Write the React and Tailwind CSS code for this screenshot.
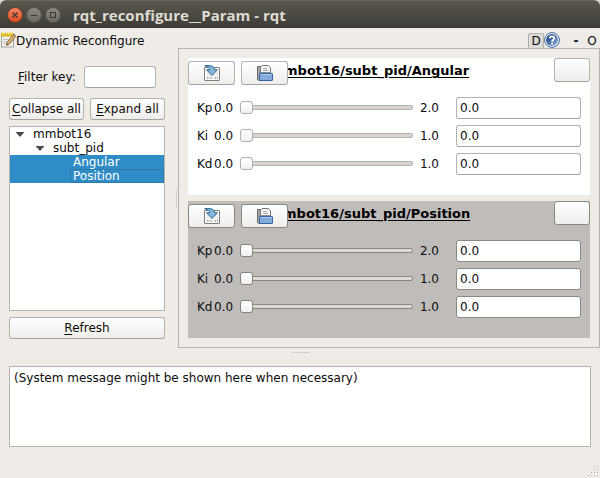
import { useState } from "react";

const BUTTON = "rounded-[3px] border bg-gradient-to-b from-white to-[#efedea] text-center";
const FIELD = "h-[22px] min-w-0 rounded-[3px] border bg-white px-[3px] outline-none";
const SOFT_EDGE = "border-[#b5b2ae] border-b-[#a6a3a0]";
const STRONG_EDGE = "border-[#8a8783]";

const GROUPS = [
  { name: "/mmbot16/subt_pid/Angular", active: false },
  { name: "/mmbot16/subt_pid/Position", active: true },
];

const PARAMS = [
  { name: "Kp", min: "0.0", max: "2.0" },
  { name: "Ki", min: "0.0", max: "1.0" },
  { name: "Kd", min: "0.0", max: "1.0" },
];

function NotepadIcon() {
  return (
    <svg width="16" height="16" viewBox="0 0 16 16" className="shrink-0" aria-hidden="true">
      <rect x="1.5" y="2.5" width="12" height="12.5" fill="#f1f1ef" stroke="#a3a49f" />
      <path d="M3 7.5h8M3 9.5h7M3 11.5h5" stroke="#c3c4c0" />
      <rect x="1" y="1" width="13" height="3.5" fill="#d9b411" />
      <path d="M2.5 0v3M4.5 0v3M6.5 0v3M8.5 0v3M10.5 0v3M12.5 0v3" stroke="#f7e58c" />
      <path d="M6.5 13.2 7.3 10.2 13.3 2.8 15.5 4.6 9.4 12z" fill="#e0b878" stroke="#6b4a1c" strokeWidth="0.8" />
      <path d="M13.3 2.8 14.3 1.6 16 3.4 15.3 4.5z" fill="#8c8f8a" />
      <path d="M6.4 13.4 6.8 11.9 7.8 12.8z" fill="#222" />
    </svg>
  );
}

function HelpIcon() {
  return (
    <svg width="16" height="16" viewBox="0 0 16 16" aria-hidden="true">
      <defs>
        <linearGradient id="help" x1="0" y1="0" x2="1" y2="1">
          <stop offset="0.3" stopColor="#2c5695" />
          <stop offset="1" stopColor="#9dbbe3" />
        </linearGradient>
      </defs>
      <circle cx="8" cy="8" r="7.4" fill="#fff" stroke="#3b659f" />
      <circle cx="8" cy="8" r="6" fill="url(#help)" />
      <path d="M5.8 6.2C5.8 3.6 10.3 3.7 10.3 6.1 10.3 7.8 8.1 7.7 8.1 9.7" fill="none" stroke="#fff" strokeWidth="1.7" />
      <rect x="7.2" y="10.8" width="1.8" height="1.8" fill="#fff" />
    </svg>
  );
}

function SaveIcon() {
  return (
    <svg width="16" height="16" viewBox="0 0 16 16" aria-hidden="true">
      <rect x="0.5" y="2.5" width="15" height="13" rx="0.5" fill="#eeeeec" stroke="#7d7f7a" />
      <path d="M1.5 3.5h13v11h-13z" fill="none" stroke="#fff" />
      <path d="M3 13h6" stroke="#b4b7b0" strokeWidth="2" strokeDasharray="1 1" />
      <path d="M11 13h3" stroke="#a5a7a2" strokeWidth="2" strokeDasharray="1 1" />
      <path
        d="M0.7 0.6H5C8.8 0.6 10.6 2.2 10.6 4.8H13.4L8 10.4 2.6 4.8H6C6 3.4 4.6 2.6 0.7 0.6z"
        fill="#86b8dc"
        stroke="#2c6793"
      />
    </svg>
  );
}

function FolderIcon() {
  return (
    <svg width="16" height="16" viewBox="0 0 16 16" aria-hidden="true">
      <path d="M0.5 1.5H5.5V15.5H1.5L0.5 14.5z" fill="#a3a5a1" stroke="#686a65" />
      <path d="M5 0.5H11.5L13.5 3V9H3.5V2z" fill="#fafafa" stroke="#73756f" />
      <path d="M6 3.5h4M6 5.5h5" stroke="#a2a4a0" />
      <path d="M4 7.5H13.5" stroke="#8a8c88" />
      <rect x="2.5" y="8.5" width="13" height="7" rx="0.5" fill="#83abdb" stroke="#3465a4" />
      <path d="M3.5 9.5h11" stroke="#aecbec" />
    </svg>
  );
}

function WindowButton({ label, close, children }) {
  return (
    <button
      aria-label={label}
      className={`flex size-4 items-center justify-center rounded-full border ${
        close
          ? "border-[#6b3a29] bg-gradient-to-b from-[#f58560] to-[#dc4b1c]"
          : "border-[#54534c] bg-gradient-to-b from-[#8b8980] to-[#6b6961]"
      }`}
    >
      <svg width="8" height="8" viewBox="0 0 8 8" fill="none" stroke="#3b3a35" aria-hidden="true">
        {children}
      </svg>
    </button>
  );
}

function TreeRow({ indent, selected, focused, branch, children }) {
  return (
    <li
      className={`flex h-[14px] items-center leading-[14px] ${indent} ${
        selected ? "bg-[#308cc6] text-white" : ""
      }`}
    >
      {branch && (
        <svg width="10" height="5" viewBox="0 0 10 5" className="mr-2 shrink-0" aria-hidden="true">
          <path d="M0.5 0H9.5L5 5z" fill="#4a4a48" />
        </svg>
      )}
      <span className={focused ? "-ml-[3px] h-[14px] flex-1 border border-[#2a7bae] pl-[2px] leading-[12px]" : ""}>
        {children}
      </span>
    </li>
  );
}

function ParamRow({ group, param, active }) {
  const [value, setValue] = useState("0.0");
  const id = `${group}-${param.name}`;
  const colors = active
    ? "[&::-webkit-slider-runnable-track]:border-[#8a8783] [&::-webkit-slider-runnable-track]:bg-[#dddad6] [&::-webkit-slider-thumb]:border-[#86837f]"
    : "[&::-webkit-slider-runnable-track]:border-[#b4b1ae] [&::-webkit-slider-runnable-track]:bg-[#d6d3d0] [&::-webkit-slider-thumb]:border-[#b0adaa]";
  return (
    <div className="flex h-[22px] items-center">
      <label htmlFor={id} className="w-[17px] shrink-0">
        {param.name}
      </label>
      <span className="w-[26px] shrink-0">{param.min}</span>
      <input
        id={id}
        type="range"
        min={param.min}
        max={param.max}
        step="0.01"
        value={value}
        onChange={(e) => setValue(e.target.value)}
        className={`mb-px h-[13px] min-w-0 flex-1 appearance-none bg-transparent [&::-webkit-slider-runnable-track]:h-[5px] [&::-webkit-slider-runnable-track]:rounded-[2px] [&::-webkit-slider-runnable-track]:border [&::-webkit-slider-thumb]:-ml-px [&::-webkit-slider-thumb]:-mt-[5px] [&::-webkit-slider-thumb]:size-[13px] [&::-webkit-slider-thumb]:appearance-none [&::-webkit-slider-thumb]:rounded-[3px] [&::-webkit-slider-thumb]:border [&::-webkit-slider-thumb]:bg-gradient-to-b [&::-webkit-slider-thumb]:from-white [&::-webkit-slider-thumb]:to-[#f2f0ee] ${colors}`}
      />
      <span className="mr-[7px] w-9 shrink-0 pr-[10px] text-right">{param.max}</span>
      <input
        aria-label={`${param.name} value`}
        value={value}
        onChange={(e) => setValue(e.target.value)}
        className={`${FIELD} w-[125px] shrink-0 ${active ? STRONG_EDGE : SOFT_EDGE}`}
      />
    </div>
  );
}

function ParamGroup({ name, active }) {
  const edge = active ? STRONG_EDGE : SOFT_EDGE;
  return (
    <section className={`relative h-[137px] ${active ? "bg-[#c0bcb9]" : "bg-white"}`}>
      <div className="flex h-6 items-start">
        <h2 className="flex-1 pr-[7px] text-center text-[13px] font-bold leading-[26px] text-black underline underline-offset-2">
          {name}
        </h2>
        <button aria-label="Close group" className={`${BUTTON} ${edge} h-6 w-9`} />
      </div>
      <div className="absolute left-0 top-[3px] flex gap-[6px]">
        <button aria-label="Save parameters" className={`${BUTTON} ${edge} flex h-6 w-[47px] items-center justify-center`}>
          <SaveIcon />
        </button>
        <button aria-label="Load parameters" className={`${BUTTON} ${edge} flex h-6 w-[47px] items-center justify-center`}>
          <FolderIcon />
        </button>
      </div>
      <div className="flex flex-col gap-[6px] px-[9px] pt-[15px]">
        {PARAMS.map((param) => (
          <ParamRow key={param.name} group={name} param={param} active={active} />
        ))}
      </div>
    </section>
  );
}

export default function App() {
  return (
    <div className="bg-[#d5d5d5]">
      <div className="flex min-h-screen flex-col overflow-hidden rounded-t-[6px] bg-[#efebe7] font-['DejaVu_Sans',sans-serif] text-[12px] leading-[14px] text-[#0c0c0c]">
        <header className="flex h-7 shrink-0 items-center gap-[3px] border-t border-[#6b695d] bg-gradient-to-b from-[#59574c] to-[#3d3c38] px-[7px]">
          <WindowButton label="Close" close>
            <path d="M1.5 1.5 6.5 6.5M6.5 1.5 1.5 6.5" strokeWidth="1.4" />
          </WindowButton>
          <WindowButton label="Minimize">
            <path d="M1 4.5H7" />
          </WindowButton>
          <WindowButton label="Maximize">
            <rect x="1.5" y="1.5" width="5" height="5" />
          </WindowButton>
          <h1 className="pl-[9px] font-['Open_Sans',sans-serif] text-[15px] font-bold text-[#dfdbd2]">
            rqt_reconfigure__Param - rqt
          </h1>
        </header>

        <div className="flex h-5 shrink-0 items-end">
          <div className="flex flex-1 items-end">
            <NotepadIcon />
            <span>Dynamic Reconfigure</span>
          </div>
          <button className="h-[15px] w-4 rounded-t-[2px] border border-b-0 border-[#b4b1ad] bg-[#dedbd7] leading-[14px]">
            D
          </button>
          <button aria-label="Help" className="h-4 w-4">
            <HelpIcon />
          </button>
          <button aria-label="Minimize panel" className="w-6 pl-2 text-center font-bold">
            -
          </button>
          <button aria-label="Float panel" className="w-4 text-center">
            O
          </button>
        </div>

        <main className="flex">
          <aside className="flex w-[165px] shrink-0 flex-col pl-[9px] pt-[18px] pb-[9px]">
            <div className="flex items-center pl-[9px]">
              <label htmlFor="filter" className="w-[66px]">
                <u className="underline-offset-2">F</u>ilter key:
              </label>
              <input id="filter" className={`${FIELD} ${SOFT_EDGE} w-[72px]`} />
            </div>
            <div className="mt-[10px] flex gap-[6px]">
              <button className={`${BUTTON} ${SOFT_EDGE} h-[22px] flex-1 whitespace-nowrap`}>
                <u className="underline-offset-2">C</u>ollapse all
              </button>
              <button className={`${BUTTON} ${SOFT_EDGE} h-[22px] flex-1 whitespace-nowrap`}>
                <u className="underline-offset-2">E</u>xpand all
              </button>
            </div>
            <ul className="mt-[6px] flex-1 border border-[#b6b3b0] bg-white">
              <TreeRow indent="pl-[5px]" branch>mmbot16</TreeRow>
              <TreeRow indent="pl-[25px]" branch>subt_pid</TreeRow>
              <TreeRow indent="pl-[63px]" selected>Angular</TreeRow>
              <TreeRow indent="pl-[63px]" selected focused>Position</TreeRow>
            </ul>
            <button className={`${BUTTON} ${SOFT_EDGE} mt-[6px] h-[22px]`}>
              <u className="underline-offset-2">R</u>efresh
            </button>
          </aside>

          <div className="flex w-[13px] shrink-0 flex-col items-end justify-center pr-px">
            <div className="h-[17px] border-r border-dotted border-[#b6b3b0]" />
          </div>

          <div className="flex min-w-0 flex-1 flex-col gap-[6px] border border-[#b6b3b0] p-[9px]">
            {GROUPS.map((group) => (
              <ParamGroup key={group.name} {...group} />
            ))}
          </div>
        </main>

        <div className="flex h-[18px] shrink-0 justify-center pt-1">
          <div className="h-0 w-[17px] border-t border-dotted border-[#b6b3b0]" />
        </div>

        <div className="flex px-[9px]">
          <textarea
            readOnly
            aria-label="System messages"
            className="h-[81px] flex-1 resize-none border border-[#b6b3b0] bg-white px-1 py-[4px] outline-none"
            defaultValue="(System message might be shown here when necessary)"
          />
        </div>

        <footer className="flex flex-1 items-end justify-end pb-px pr-px">
          <svg width="12" height="12" viewBox="0 0 12 12" aria-hidden="true" fill="#b6b3b0">
            <path d="M10 1h1v1h-1zM10 4h1v1h-1zM7 4h1v1h-1zM10 7h1v1h-1zM7 7h1v1h-1zM4 7h1v1h-1zM10 10h1v1h-1zM7 10h1v1h-1zM4 10h1v1h-1zM1 10h1v1h-1z" />
          </svg>
        </footer>
      </div>
    </div>
  );
}
